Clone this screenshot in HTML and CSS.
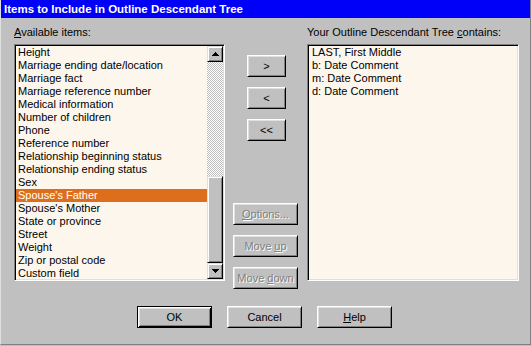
FILE: index.html
```html
<!DOCTYPE html>
<html>
<head>
<meta charset="utf-8">
<link rel="stylesheet" href="styles.css">
</head>
<body>
<div class="window">
  <div class="titlebar">Items to Include in Outline Descendant Tree</div>
  <div class="content">
    <div class="label"><u>A</u>vailable items:</div>
    <div></div>
    <div class="label">Your Outline Descendant Tree <u>c</u>ontains:</div>

    <div class="listbox left">
      <ul class="items">
        <li>Height</li>
        <li>Marriage ending date/location</li>
        <li>Marriage fact</li>
        <li>Marriage reference number</li>
        <li>Medical information</li>
        <li>Number of children</li>
        <li>Phone</li>
        <li>Reference number</li>
        <li>Relationship beginning status</li>
        <li>Relationship ending status</li>
        <li>Sex</li>
        <li class="selected">Spouse's Father</li>
        <li>Spouse's Mother</li>
        <li>State or province</li>
        <li>Street</li>
        <li>Weight</li>
        <li>Zip or postal code</li>
        <li>Custom field</li>
      </ul>
      <div class="scrollbar">
        <div class="sbtn"><svg width="7" height="4" viewBox="0 0 7 4"><path d="M3 0h1v1h1v1h1v1h1v1H0V3h1V2h1V1h1z" fill="#000"/></svg></div>
        <div class="track"></div>
        <div class="thumb"></div>
        <div class="sbtn"><svg width="7" height="4" viewBox="0 0 7 4"><path d="M0 0h7v1H6v1H5v1H4v1H3V3H2V2H1V1H0z" fill="#000"/></svg></div>
      </div>
    </div>

    <div class="middle">
      <div class="group arrows">
        <button class="btn small"><span>&gt;</span></button>
        <button class="btn small"><span>&lt;</span></button>
        <button class="btn small"><span>&lt;&lt;</span></button>
      </div>
      <div class="group actions">
        <button class="btn mid disabled"><span><u>O</u>ptions...</span></button>
        <button class="btn mid disabled"><span>Move <u>u</u>p</span></button>
        <button class="btn mid disabled"><span>Move <u>d</u>own</span></button>
      </div>
    </div>

    <div class="listbox right">
      <ul class="items">
        <li>LAST, First Middle</li>
        <li>b: Date Comment</li>
        <li>m: Date Comment</li>
        <li>d: Date Comment</li>
      </ul>
    </div>
  </div>
  <div class="footer">
    <button class="btn wide default"><span>OK</span></button>
    <button class="btn wide"><span>Cancel</span></button>
    <button class="btn wide"><span><u>H</u>elp</span></button>
  </div>
</div>
</body>
</html>
```

FILE: styles.css
```css
* { box-sizing: border-box; }
html, body {
  margin: 0;
  padding: 0;
  background: #c0c0c0;
}
body {
  font-family: "Liberation Sans", Arial, sans-serif;
  font-size: 11px;
  color: #000;
}
.window {
  width: 531px;
  height: 345px;
  background: #c0c0c0;
  border-left: 1px solid #dfdfdf;
  border-right: 1px solid #808080;
  border-bottom: 1px solid #808080;
  position: relative;
}
.titlebar {
  height: 18px;
  background: #0000f8;
  color: #fff;
  font-weight: bold;
  font-size: 11.5px;
  line-height: 18px;
  padding-left: 3px;
  white-space: nowrap;
}
.content {
  display: grid;
  grid-template-columns: 211px 82px 212px;
  grid-template-rows: 13px 237px;
  row-gap: 5px;
  padding: 8px 0 0 13px;
}
.label {
  line-height: 13px;
  white-space: nowrap;
}
.label u { text-decoration-thickness: 1px; text-underline-offset: 1px; }
.listbox {
  background: #fdf6ec;
  border-top: 1px solid #808080;
  border-left: 1px solid #808080;
  border-right: 1px solid #fff;
  border-bottom: 1px solid #fff;
  box-shadow: inset 1px 1px 0 #000, inset -1px -1px 0 #dfdfdf;
  padding: 1px;
  display: flex;
  height: 237px;
}
.items {
  list-style: none;
  margin: 0;
  padding: 0;
  flex: 1;
}
.items li {
  line-height: 13px;
  height: 13px;
  padding-left: 2px;
  white-space: nowrap;
}
.right .items li { padding-left: 3px; }
.items li.selected {
  background: #dd6f1c;
  color: #fff;
}
.scrollbar {
  width: 16px;
  display: flex;
  flex-direction: column;
}
.sbtn {
  width: 16px;
  height: 16px;
  background: #c0c0c0;
  border-top: 1px solid #dfdfdf;
  border-left: 1px solid #dfdfdf;
  border-right: 1px solid #000;
  border-bottom: 1px solid #000;
  box-shadow: inset 1px 1px 0 #fff, inset -1px -1px 0 #808080;
  display: flex;
  align-items: center;
  justify-content: center;
}
.track {
  height: 114px;
  background: repeating-conic-gradient(#c0c0c0 0 25%, #fff 0 50%) 0 0 / 2px 2px;
}
.thumb {
  flex: 1;
  background: #c0c0c0;
  border-top: 1px solid #dfdfdf;
  border-left: 1px solid #dfdfdf;
  border-right: 1px solid #000;
  border-bottom: 1px solid #000;
  box-shadow: inset 1px 1px 0 #fff, inset -1px -1px 0 #808080;
}
.middle {
  display: flex;
  flex-direction: column;
}
.group {
  display: flex;
  flex-direction: column;
}
.arrows {
  margin-top: 11px;
  padding-left: 22px;
  gap: 10px;
}
.actions {
  margin-top: 62px;
  padding-left: 8px;
  gap: 10px;
}
.btn {
  font-family: "Liberation Sans", Arial, sans-serif;
  font-size: 11px;
  color: #000;
  background: #c0c0c0;
  height: 22px;
  padding: 0;
  margin: 0;
  border-top: 1px solid #fff;
  border-left: 1px solid #fff;
  border-right: 1px solid #000;
  border-bottom: 1px solid #000;
  box-shadow: inset 1px 1px 0 #dfdfdf, inset -1px -1px 0 #808080;
  display: flex;
  align-items: center;
  justify-content: center;
  line-height: 13px;
}
.btn span { white-space: pre; }
.btn u { text-decoration-thickness: 1px; text-underline-offset: 1px; }
.small { width: 39px; }
.mid { width: 65px; }
.wide { width: 75px; }
.disabled {
  color: #808080;
  text-shadow: 1px 1px 0 #fff;
}
.footer {
  display: flex;
  justify-content: center;
  gap: 15px;
  margin-top: 25px;
  padding-right: 2px;
}
.default {
  border: 1px solid #000;
  box-shadow: inset 1px 1px 0 #fff, inset -1px -1px 0 #000, inset 2px 2px 0 #dfdfdf, inset -2px -2px 0 #808080;
}
```
